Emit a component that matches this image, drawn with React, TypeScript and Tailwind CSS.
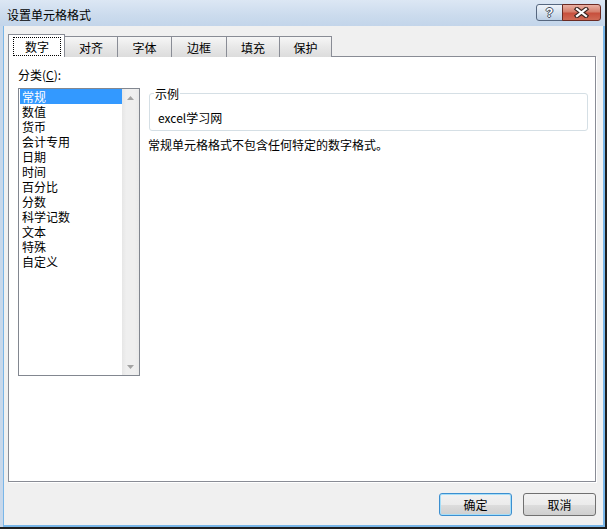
const categories = [
  '常规',
  '数值',
  '货币',
  '会计专用',
  '日期',
  '时间',
  '百分比',
  '分数',
  '科学记数',
  '文本',
  '特殊',
  '自定义',
]

const btnBase =
  'flex h-[23px] w-[73px] items-center justify-center rounded-[3px] border text-[12px] leading-[15px] text-black bg-[linear-gradient(#f2f2f2_0%,#ebebeb_50%,#dddddd_50%,#cfcfcf_100%)]'

const tabBase =
  'relative -ml-px flex h-[21px] items-center justify-center border border-b-0 border-[#898c95] bg-[linear-gradient(#f6f6f6,#e8e8e8_50%,#dcdcdc)] text-[12px] leading-[15px]'

// 标题栏右侧的帮助/关闭按钮
const CaptionButtons = () => (
  <div className="mt-[4px] mr-[4px] ml-auto flex">
    <div className="flex h-[17px] w-[27px] items-center justify-center rounded-l-[3px] border border-[#56677f] bg-[linear-gradient(#eef3f9,#d6e2ef_50%,#bccfe4)]">
      <span className="text-[12px] leading-none font-bold text-white [font-family:'Liberation_Sans',sans-serif] [text-shadow:1px_0_#3e4b5c,-1px_0_#3e4b5c,0_1px_#3e4b5c,0_-1px_#3e4b5c]">
        ?
      </span>
    </div>
    <div className="-ml-px flex h-[17px] w-[39px] items-center justify-center rounded-r-[3px] border border-[#6b2a22] bg-[linear-gradient(#eab0a3,#d57f6c_45%,#c7503d_55%,#cf6a55)]">
      <svg width="15" height="11" viewBox="0 0 15 11">
        <path d="M3 2 L12 9 M12 2 L3 9" stroke="#3b2620" strokeWidth="4.4" strokeLinecap="square" />
        <path d="M3 2 L12 9 M12 2 L3 9" stroke="#ffffff" strokeWidth="2.2" strokeLinecap="square" />
      </svg>
    </div>
  </div>
)

const ScrollArrow = ({ down }: { down?: boolean }) => (
  <div className="flex h-[17px] items-center justify-center">
    <svg width="7" height="4" viewBox="0 0 7 4">
      <polygon points={down ? '0,0 7,0 3.5,4' : '3.5,0 7,4 0,4'} fill="#a3a3a3" />
    </svg>
  </div>
)

export default function App() {
  return (
    <div className="flex h-[529px] w-[607px] flex-col border-r-2 border-b-2 border-[#1e1e1e] bg-[#c8d8eb] text-black [font-family:'Noto_Sans_CJK_SC',sans-serif]">
      {/* 标题栏 */}
      <div className="flex h-[26px] shrink-0 items-start bg-[linear-gradient(#dce7f4,#cbdbed_60%,#c3d5ea)]">
        <span className="mt-[7px] ml-[7px] text-[12px] leading-[15px]">设置单元格格式</span>
        <CaptionButtons />
      </div>

      {/* 客户区 */}
      <div className="ml-[3px] flex flex-1 flex-col border-r-2 border-b-2 border-l border-[#79b6e8] bg-[#f0f0f0]">
        {/* 选项卡 */}
        <div className="mt-[8px] ml-[4px] flex h-[23px] items-end">
          <div className="relative z-10 flex h-[23px] w-[57px] border border-b-0 border-[#898c95] bg-white pt-[2px] pr-[3px] pb-[1px] pl-[4px]">
            <span className="flex flex-1 items-center justify-center border border-dotted border-black text-[12px] leading-[15px]">
              数字
            </span>
          </div>
          <div className={`${tabBase} w-[54px]`}>对齐</div>
          <div className={`${tabBase} w-[55px]`}>字体</div>
          <div className={`${tabBase} w-[56px]`}>边框</div>
          <div className={`${tabBase} w-[54px]`}>填充</div>
          <div className={`${tabBase} w-[53px]`}>保护</div>
        </div>

        {/* 选项卡面板 */}
        <div className="-mt-px ml-[4px] flex h-[426px] w-[588px] border border-[#898c95] bg-white pr-[7px] pl-[9px] text-[12px] leading-[15px] shadow-[1px_1px_0_#ffffff]">
          <div className="w-[122px] pt-[10px]">
            <div>
              分类(<span className="underline">C</span>):
            </div>
            <div className="mt-[6px] flex h-[288px] border border-[#828790]">
              <ul className="flex-1 pl-px">
                {categories.map((c, i) => (
                  <li
                    key={c}
                    className={
                      i === 0
                        ? 'h-[15px] bg-[#3399ff] pl-[2px] text-white'
                        : 'h-[15px] pl-[2px]'
                    }
                  >
                    {c}
                  </li>
                ))}
              </ul>
              <div className="flex w-[17px] flex-col justify-between bg-[linear-gradient(to_right,#e6e6e6,#efefef_25%,#efefef_75%,#e9e9e9)]">
                <ScrollArrow />
                <ScrollArrow down />
              </div>
            </div>
          </div>

          <div className="ml-[8px] flex-1 pt-[29px]">
            <fieldset className="ml-px rounded-[3px] border border-[#d5dfe5] px-[4px] pb-[5px]">
              <legend className="px-px leading-[15px]">示例</legend>
              <div className="mt-[9px] pl-[4px]">excel学习网</div>
            </fieldset>
            <p className="mt-[6px]">常规单元格格式不包含任何特定的数字格式。</p>
          </div>
        </div>

        {/* 底部按钮 */}
        <div className="mt-[11px] flex justify-end gap-[11px] pr-[7px]">
          <button
            type="button"
            className={`${btnBase} border-[#3c8fd0] shadow-[inset_0_0_0_1px_#a6def8]`}
          >
            确定
          </button>
          <button type="button" className={`${btnBase} border-[#707070]`}>
            取消
          </button>
        </div>
      </div>
    </div>
  )
}
